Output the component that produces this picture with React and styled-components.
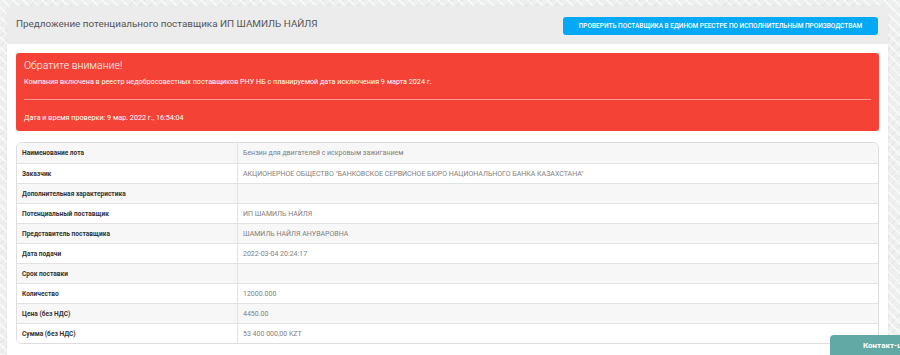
import styled, { createGlobalStyle } from "styled-components";

const GlobalStyle = createGlobalStyle`
  html, body {
    margin: 0;
    padding: 0;
    overflow: hidden;
  }
  body {
    font-family: Roboto, "Noto Sans", "Liberation Sans", sans-serif;
    background-color: #eef0ef;
    background-image:
      repeating-linear-gradient(45deg, rgba(255,255,255,0.55) 0 2px, transparent 2px 7px),
      repeating-linear-gradient(-45deg, rgba(220,224,222,0.5) 0 1px, transparent 1px 7px);
    min-height: 355px;
  }
`

const Page = styled.div`
  padding: 6px 12px 0 7px;
`

const Card = styled.div`
  background: #fff;
  border-radius: 6px 6px 0 0;
  box-shadow: 0 0 2px rgba(0, 0, 0, 0.08);
  min-height: 349px;
`

const CardHeader = styled.div`
  display: flex;
  align-items: center;
  justify-content: space-between;
  height: 38px;
  padding: 0 10px 0 9px;
  background: #ececec;
  border-radius: 6px 6px 0 0;
`

const Title = styled.h1`
  margin: 0;
  margin-top: -4px;
  font-size: 9.9px;
  font-weight: 400;
  color: #555;
`

const CheckButton = styled.button`
  height: 18px;
  width: 315px;
  margin-top: 2px;
  border: none;
  border-radius: 3px;
  background: #03a9f4;
  color: #fff;
  font-family: inherit;
  font-size: 6.5px;
  font-weight: 500;
  text-transform: uppercase;
  white-space: nowrap;
  padding: 0;
`

const CardBody = styled.div`
  padding: 9px 9px 0 9px;
`

const Alert = styled.div`
  background: #f44336;
  border-radius: 3px;
  color: #fff;
  padding: 6px 8px 8px 8px;
`

const AlertTitle = styled.div`
  font-size: 10.5px;
  font-weight: 300;
  line-height: 14px;
`

const AlertText = styled.div`
  font-size: 7.2px;
  line-height: 10px;
  margin-top: ${p => p.$top || 0}px;
`

const Divider = styled.hr`
  border: none;
  border-top: 1px solid rgba(255, 255, 255, 0.45);
  margin: 12px 0 13px 0;
`

const Table = styled.div`
  margin-top: 11px;
  border: 1px solid #dedede;
  border-radius: 6px;
  overflow: hidden;
`

const Row = styled.div`
  display: grid;
  grid-template-columns: 221px 1fr;
  height: 20px;
  background: ${p => (p.$odd ? "#f7f7f7" : "#fff")};
  border-top: ${p => (p.$first ? "none" : "1px solid #e2e2e2")};
  box-sizing: border-box;
`

const Label = styled.div`
  display: flex;
  align-items: center;
  padding-left: 5px;
  border-right: 1px solid #e2e2e2;
  font-size: 6.6px;
  font-weight: 700;
  color: #333;
`

const Value = styled.div`
  display: flex;
  align-items: center;
  padding-left: 5px;
  font-size: 7px;
  color: #808080;
`

const ContactButton = styled.div`
  position: fixed;
  left: 830px;
  bottom: 0;
  width: 120px;
  height: 20px;
  padding-left: 33px;
  display: flex;
  align-items: center;
  background: #62a8a4;
  border-radius: 4px 0 0 0;
  color: #fff;
  font-size: 8px;
  font-weight: 700;
  white-space: nowrap;
`

const rows = [
  ["Наименование лота", "Бензин для двигателей с искровым зажиганием"],
  ["Заказчик", "АКЦИОНЕРНОЕ ОБЩЕСТВО \"БАНКОВСКОЕ СЕРВИСНОЕ БЮРО НАЦИОНАЛЬНОГО БАНКА КАЗАХСТАНА\""],
  ["Дополнительная характеристика", ""],
  ["Потенциальный поставщик", "ИП ШАМИЛЬ НАЙЛЯ"],
  ["Представитель поставщика", "ШАМИЛЬ НАЙЛЯ АНУВАРОВНА"],
  ["Дата подачи", "2022-03-04 20:24:17"],
  ["Срок поставки", ""],
  ["Количество", "12000.000"],
  ["Цена (без НДС)", "4450.00"],
  ["Сумма (без НДС)", "53 400 000,00 KZT"],
]

export default function App() {
  return (
    <>
      <GlobalStyle />
      <Page>
        <Card>
          <CardHeader>
            <Title>Предложение потенциального поставщика ИП ШАМИЛЬ НАЙЛЯ</Title>
            <CheckButton>Проверить поставщика в едином реестре по исполнительным производствам</CheckButton>
          </CardHeader>
          <CardBody>
            <Alert>
              <AlertTitle>Обратите внимание!</AlertTitle>
              <AlertText $top={4}>
                Компания включена в реестр недобросовестных поставщиков РНУ НБ с планируемой дата исключения 9 марта 2024 г.
              </AlertText>
              <Divider />
              <AlertText>Дата и время проверки: 9 мар. 2022 г., 16:54:04</AlertText>
            </Alert>
            <Table>
              {rows.map(([label, value], i) => (
                <Row key={label} $odd={i % 2 === 0} $first={i === 0}>
                  <Label>{label}</Label>
                  <Value>{value}</Value>
                </Row>
              ))}
            </Table>
          </CardBody>
        </Card>
      </Page>
      <ContactButton>Контакт-центр</ContactButton>
    </>
  );
}
